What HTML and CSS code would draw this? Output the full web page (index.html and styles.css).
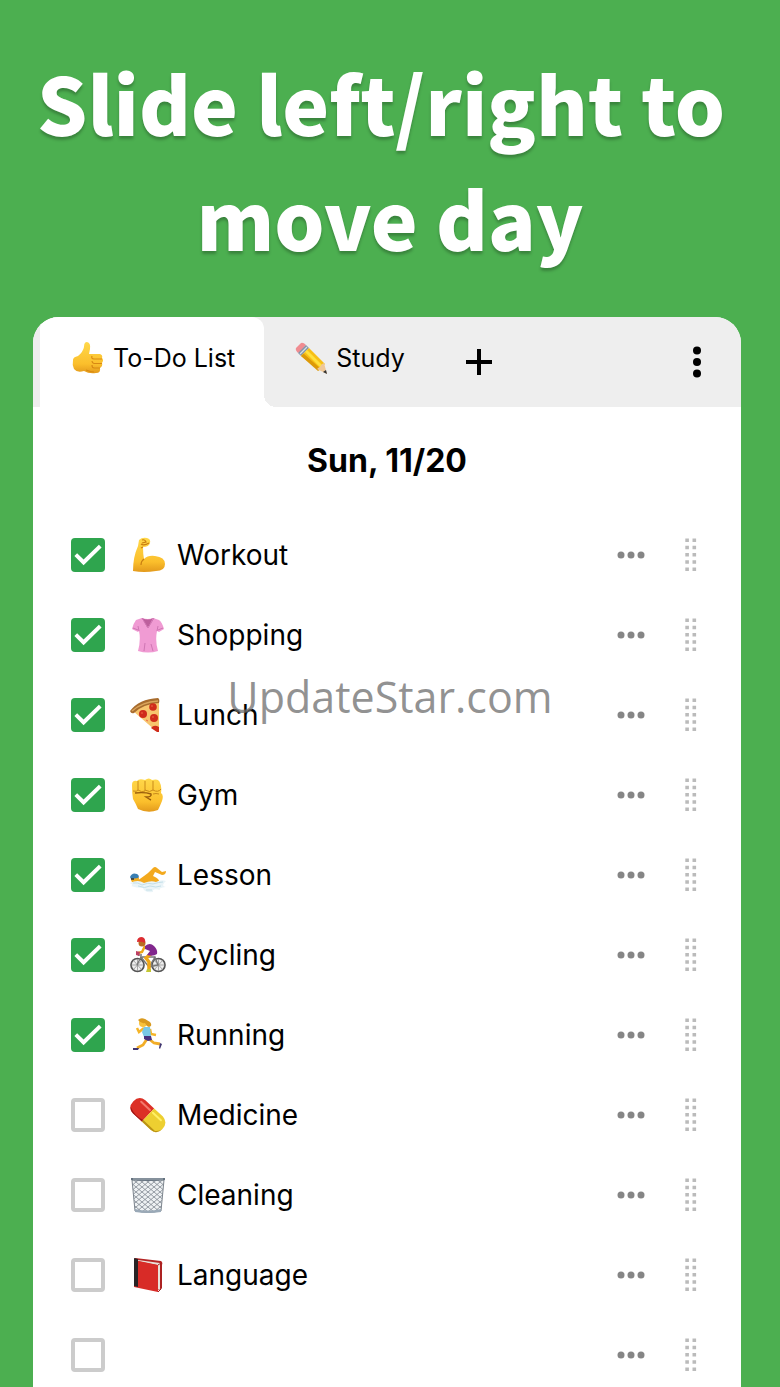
FILE: index.html
```
<!DOCTYPE html>
<html lang="en">
<head>
  <meta charset="UTF-8">
  <meta name="viewport" content="width=device-width, initial-scale=1.0">
  <title>To-Do List</title>
  <link rel="stylesheet" href="styles.css">
</head>
<body>
  <!-- Shared icons -->
  <svg class="sprite" aria-hidden="true">
    <defs>
      <linearGradient id="skin" x1="0" y1="0" x2="0" y2="1">
        <stop offset="0" stop-color="#ffd84a"/>
        <stop offset="0.7" stop-color="#fbbf2c"/>
        <stop offset="1" stop-color="#e39a1c"/>
      </linearGradient>
      <pattern id="mesh" width="6" height="5" patternUnits="userSpaceOnUse">
        <path d="M0 0L6 5M6 0L0 5" stroke="#7d858e" stroke-width="0.800"/>
      </pattern>
    </defs>
    <symbol id="more" viewBox="0 0 28 8">
      <circle cx="4" cy="4" r="3.5"/><circle cx="14" cy="4" r="3.5"/><circle cx="24" cy="4" r="3.5"/>
    </symbol>
    <symbol id="grip" viewBox="0 0 12 34">
      <path d="M0.300 0.500h3.600v3.600h-3.600zM7.500 0.500h3.600v3.600h-3.600zM0.300 7.700h3.600v3.600h-3.600zM7.500 7.700h3.600v3.600h-3.600zM0.300 15h3.600v3.600h-3.600zM7.500 15h3.600v3.600h-3.600zM0.300 22.200h3.600v3.600h-3.600zM7.500 22.200h3.600v3.600h-3.600zM0.300 29.500h3.600v3.600h-3.600zM7.500 29.500h3.600v3.600h-3.600z"/>
    </symbol>
  </svg>

  <h1 class="headline">Slide left/right to&nbsp;<br>move day</h1>

  <main class="card">
    <nav class="tabs">
      <button class="tab active">
        <svg class="tab-icon" viewBox="0 0 32 32">
          <path d="M1 18Q1 15 6 14Q11 10 12 5Q12 0 15 0Q19 1 18 7L17 12H28Q31 13 30 16Q32 18 30 21Q31 24 28 26Q29 31 24 31Q17 32 12 29Q5 31 2 27Q0 23 1 18Z" fill="url(#skin)"/>
          <path d="M30 17H22Q19 17 20 14M30 21.500H22Q20 21 20 19M28 26H22Q20 26 20 23M14 28Q19 30 22 30" fill="none" stroke="#d88913" stroke-width="1.200"/>
        </svg>
        To-Do List
      </button>
      <button class="tab">
        <svg class="tab-icon" viewBox="0 0 32 32">
          <path d="M1 6L6 1Q8 0 11 3L6 9L3 11Q0 8 1 6Z" fill="#f08c91"/>
          <path d="M3 11L11 3L14 6L6 14Z" fill="#8294a7"/>
          <path d="M5 12L12 5" stroke="#d4dde4" stroke-width="1.200"/>
          <path d="M6 14L14 6L30 22L24 28Z" fill="#f7bf16"/>
          <path d="M6 14L8.500 11.500L26 27L23 29Z" fill="#dc9908"/>
          <path d="M11 9L27 25" stroke="#ffe13d" stroke-width="3"/>
          <path d="M22 27Q24 25 25 25Q26 22 29 21L32 32Z" fill="#efc797"/>
          <path d="M28 30L31 28L32 32Z" fill="#333"/>
        </svg>
        Study
      </button>
      <button class="icon-button add" aria-label="Add list">
        <svg width="28" height="28" viewBox="0 0 28 28"><path d="M14 1V27M1 14H27" stroke="#000" stroke-width="4"/></svg>
      </button>
      <button class="icon-button menu" aria-label="Menu">
        <svg width="8" height="32" viewBox="0 0 8 32"><circle cx="4" cy="4.500" r="4"/><circle cx="4" cy="16" r="4"/><circle cx="4" cy="27.500" r="4"/></svg>
      </button>
    </nav>

    <h2 class="date">Sun, 11/20</h2>

    <ul class="list">
      <li class="item">
        <label class="task">
          <input type="checkbox" class="check" checked>
          <svg class="emoji" viewBox="0 0 36 36">
            <path d="M3 34Q3 20 8 9L9 3Q12 0 17 1Q21 2 20 6Q19 10 13 10Q13 17 14 22Q18 18 25 19Q35 20 35 27Q35 34 26 34Q14 36 3 34Z" fill="url(#skin)"/>
            <path d="M11 7Q14 9 19 6M12 3Q15 2 16 5L12 6M13 10L11 11M14 22Q11 24 11 28" fill="none" stroke="#c97f12" stroke-width="1.200"/>
          </svg>
          <span>Workout</span>
        </label>
        <button class="icon-button" aria-label="More"><svg class="more"><use href="#more"/></svg></button>
        <button class="icon-button" aria-label="Reorder"><svg class="grip"><use href="#grip"/></svg></button>
      </li>
      <li class="item">
        <label class="task">
          <input type="checkbox" class="check" checked>
          <svg class="emoji" viewBox="0 0 36 36">
            <path d="M12 1L6 3Q3 7 2 12L8 15L9 14Q11 23 8 34Q18 37 28 34Q25 24 27 14L29 15L34 12Q32 5 29 3L23 1Q18 3 12 1Z" fill="#f09bd3"/>
            <path d="M12 1Q18 4 23 1L19 9L17 10Z" fill="#bd5f9d"/>
            <path d="M12 1L18 11L24 1M9 14L8 9M27 14L28 9M14 34L15 26M23 34L21 27M3 11L8 13M33 11L28 13" fill="none" stroke="#cf76b3" stroke-width="1"/>
          </svg>
          <span>Shopping</span>
        </label>
        <button class="icon-button" aria-label="More"><svg class="more"><use href="#more"/></svg></button>
        <button class="icon-button" aria-label="Reorder"><svg class="grip"><use href="#grip"/></svg></button>
      </li>
      <li class="item">
        <label class="task">
          <input type="checkbox" class="check" checked>
          <svg class="emoji" viewBox="0 0 36 36">
            <path d="M3 14Q13 5 29 4V35L26 34Z" fill="#f7c56e"/>
            <path d="M0 14Q9 2 28 1Q30 2 29 6Q13 7 4 16Q1 17 0 14Z" fill="#a86c2e"/>
            <path d="M2 14Q12 5 28 4" fill="none" stroke="#d9a45b" stroke-width="1.500"/>
            <circle cx="13" cy="17" r="4" fill="#cf2c1b"/><circle cx="23" cy="10" r="3.800" fill="#cf2c1b"/>
            <circle cx="24" cy="21" r="4" fill="#cf2c1b"/><path d="M21 31Q24 27 29 30V35L27 35Z" fill="#cf2c1b"/>
            <path d="M11 16H13M21 9H23M22 20H24M16 23L18 24" stroke="#ee6744" stroke-width="1"/>
          </svg>
          <span>Lunch</span>
        </label>
        <button class="icon-button" aria-label="More"><svg class="more"><use href="#more"/></svg></button>
        <button class="icon-button" aria-label="Reorder"><svg class="grip"><use href="#grip"/></svg></button>
      </li>
      <li class="item">
        <label class="task">
          <input type="checkbox" class="check" checked>
          <svg class="emoji" viewBox="0 0 36 36">
            <path d="M2 8Q2 3 7 4Q9 1 15 3Q19 0 22 3Q29 1 30 6Q32 9 31 16Q34 18 32 24Q30 29 28 33Q18 37 8 32Q6 27 3 22Q2 16 2 8Z" fill="url(#skin)"/>
            <path d="M8 4V13Q7 15 3 14M15 4V14Q12 16 8 13M23 4V13Q20 16 15 13M31 12Q28 16 23 13M23 17Q26 16 29 17" fill="none" stroke="#c98a1b" stroke-width="1"/>
            <path d="M5 16Q15 15 21 17Q22 20 16 20Q19 22 21 23" fill="none" stroke="#9a5d0c" stroke-width="1.400"/>
          </svg>
          <span>Gym</span>
        </label>
        <button class="icon-button" aria-label="More"><svg class="more"><use href="#more"/></svg></button>
        <button class="icon-button" aria-label="Reorder"><svg class="grip"><use href="#grip"/></svg></button>
      </li>
      <li class="item">
        <label class="task">
          <input type="checkbox" class="check" checked>
          <svg class="emoji" viewBox="0 0 36 36">
            <path d="M7 24L14 19L18 16L23 11Q25 9 27 11L32 15L36 14Q36 18 32 18L25 15L23 19Q30 22 29 25L13 27Z" fill="#f3a91d"/>
            <circle cx="5" cy="22" r="4" fill="#f4ae20"/>
            <path d="M0 20Q2 15 7 17Q10 19 8 21L1 22Z" fill="#397eb2"/>
            <path d="M1 22H4" stroke="#333" stroke-width="1.500"/>
            <path d="M0 26Q8 22 14 26Q21 23 26 25Q31 22 36 24Q30 29 36 30Q28 31 30 33Q22 31 23 35Q14 36 13 31Q6 31 1 29Q4 28 0 26Z" fill="#eaf4f8"/>
            <path d="M3 26Q8 25 12 28Q18 25 23 27Q29 25 33 25M8 29Q15 32 20 29Q26 31 31 29M16 33H22" fill="none" stroke="#c3dfe8" stroke-width="1"/>
          </svg>
          <span>Lesson</span>
        </label>
        <button class="icon-button" aria-label="More"><svg class="more"><use href="#more"/></svg></button>
        <button class="icon-button" aria-label="Reorder"><svg class="grip"><use href="#grip"/></svg></button>
      </li>
      <li class="item">
        <label class="task">
          <input type="checkbox" class="check" checked>
          <svg class="emoji" viewBox="0 0 36 36">
            <circle cx="7.500" cy="28" r="6.500" fill="#eee" stroke="#555" stroke-width="1.700"/>
            <circle cx="28.500" cy="28" r="6.500" fill="#eee" stroke="#555" stroke-width="1.700"/>
            <path d="M7.500 22V34M1 28H14M3 23L12 33M12 23L3 33M28.500 22V34M22 28H35M24 23L33 33M33 23L24 33" stroke="#888" stroke-width="0.700"/>
            <path d="M7 28L11 20L19 30L25 20L28 28M10 20H25M19 30L28 28M8 18H12" fill="none" stroke="#777" stroke-width="1.300"/>
            <path d="M23 15L16 21L19 25V32" fill="none" stroke="#efa718" stroke-width="3.500"/>
            <path d="M15 9L12 15L8 16" fill="none" stroke="#efa718" stroke-width="2.500"/>
            <path d="M15 9Q20 5 24 9Q28 13 27 17Q23 20 17 18L20 14L15 12Z" fill="#81278d"/>
            <circle cx="12" cy="6" r="3.500" fill="#b96d22"/>
            <path d="M7 5Q7 0 12 0Q16 1 15 6Q11 4 7 5Z" fill="#dc2d32"/>
            <path d="M6 14L10 15L9 19L6 18Z" fill="#bd4064"/>
            <path d="M17 32H21V35H16Z" fill="#c3c734"/>
          </svg>
          <span>Cycling</span>
        </label>
        <button class="icon-button" aria-label="More"><svg class="more"><use href="#more"/></svg></button>
        <button class="icon-button" aria-label="Reorder"><svg class="grip"><use href="#grip"/></svg></button>
      </li>
      <li class="item">
        <label class="task">
          <input type="checkbox" class="check" checked>
          <svg class="emoji" viewBox="0 0 36 36">
            <path d="M14 11L9 15L7 11M20 12L21 17L26 18" fill="none" stroke="#f5b529" stroke-width="2.500"/>
            <path d="M17 22L13 28L7 31M19 22L24 26L30 27" fill="none" stroke="#f2ad26" stroke-width="2.800"/>
            <path d="M14 10L20 10L21 19L14 20L12 15Z" fill="#79c8e6"/>
            <path d="M14 19H21L22 23L18 24L14 22Z" fill="#49317f"/>
            <circle cx="13" cy="6" r="4" fill="#f8c23b"/>
            <path d="M8 3Q11 0 15 2L20 5Q23 9 19 10Q16 9 15 6Q11 7 8 3Z" fill="#d99a1e"/>
            <path d="M3 31L9 31L8 33L3 33ZM30 26L32 27L30 32L29 31Z" fill="#40356f"/>
          </svg>
          <span>Running</span>
        </label>
        <button class="icon-button" aria-label="More"><svg class="more"><use href="#more"/></svg></button>
        <button class="icon-button" aria-label="Reorder"><svg class="grip"><use href="#grip"/></svg></button>
      </li>
      <li class="item">
        <label class="task">
          <input type="checkbox" class="check">
          <svg class="emoji" viewBox="0 0 36 36">
            <g transform="rotate(43 18 18)">
              <path d="M18 9H6Q-2 10 -2 18Q-2 27 6 27H18Z" fill="#dc3026"/>
              <path d="M18 9H30Q38 10 38 18Q38 27 30 27H18Z" fill="#edcf31"/>
              <path d="M0 24Q9 28 18 25V27H6Q2 27 0 24Z" fill="#9e1717"/>
              <path d="M18 25H34Q38 22 38 18Q38 27 30 27H18Z" fill="#b99216"/>
              <path d="M4 13H16" stroke="#f4796b" stroke-width="2" stroke-linecap="round"/>
              <path d="M20 13H31" stroke="#fff067" stroke-width="2" stroke-linecap="round"/>
            </g>
          </svg>
          <span>Medicine</span>
        </label>
        <button class="icon-button" aria-label="More"><svg class="more"><use href="#more"/></svg></button>
        <button class="icon-button" aria-label="Reorder"><svg class="grip"><use href="#grip"/></svg></button>
      </li>
      <li class="item">
        <label class="task">
          <input type="checkbox" class="check">
          <svg class="emoji" viewBox="0 0 36 36">
            <path d="M2 3H34L31 34Q18 37 5 34Z" fill="#eef1f3"/>
            <path d="M2 3H34L31 34Q18 37 5 34Z" fill="url(#mesh)" stroke="#7d858e" stroke-width="1"/>
            <path d="M5 32Q18 35 31 32L31 35Q18 37 5 35Z" fill="#9aa9b7"/>
            <path d="M1 1H35V3Q18 5 1 3Z" fill="#65727f"/>
            <path d="M3 2H33" stroke="#a6b0ba" stroke-width="1"/>
          </svg>
          <span>Cleaning</span>
        </label>
        <button class="icon-button" aria-label="More"><svg class="more"><use href="#more"/></svg></button>
        <button class="icon-button" aria-label="Reorder"><svg class="grip"><use href="#grip"/></svg></button>
      </li>
      <li class="item">
        <label class="task">
          <input type="checkbox" class="check">
          <svg class="emoji" viewBox="0 0 36 36">
            <path d="M5 1L31 4Q33 5 32 8V31L27 34L5 27Z" fill="#b42525"/>
            <path d="M8 3L30 6V32L27 33V8L7 4Z" fill="#e9e0d8"/>
            <path d="M4 3L28 8V35L4 30Z" fill="#d82b27"/>
            <path d="M4 1L8 2V30L4 29Z" fill="#292426"/>
            <path d="M28 8L31 6V32L28 35" fill="none" stroke="#a42121" stroke-width="1"/>
          </svg>
          <span>Language</span>
        </label>
        <button class="icon-button" aria-label="More"><svg class="more"><use href="#more"/></svg></button>
        <button class="icon-button" aria-label="Reorder"><svg class="grip"><use href="#grip"/></svg></button>
      </li>
      <li class="item">
        <label class="task">
          <input type="checkbox" class="check" aria-label="New task">
        </label>
        <button class="icon-button" aria-label="More"><svg class="more"><use href="#more"/></svg></button>
        <button class="icon-button" aria-label="Reorder"><svg class="grip"><use href="#grip"/></svg></button>
      </li>
    </ul>
  </main>

  <div class="watermark">UpdateStar.com</div>
</body>
</html>
```
FILE: styles.css
```
* {
  box-sizing: border-box;
}

body {
  margin: 0;
  height: 100vh;
  overflow: hidden;
  position: relative;
  background-color: #4caf50;
  color: #000;
  font-family: Inter, Arial, sans-serif;
}

.sprite {
  position: absolute;
  width: 0;
  height: 0;
}

.headline {
  margin: 0;
  padding: 44px 0 43px;
  color: #fff;
  font-family: "Noto Sans CJK JP", sans-serif;
  font-size: 79px;
  font-weight: 900;
  line-height: 115px;
  text-align: center;
  text-shadow: 0 3px 3px rgba(0, 0, 0, 0.25);
}

.card {
  margin: 0 39px 0 33px;
  background-color: #fff;
  border-radius: 26px 26px 0 0;
  overflow: hidden;
}

/* Tabs */
.tabs {
  display: flex;
  align-items: stretch;
  height: 90px;
  padding: 0 40px 0 7px;
  background-color: #eee;
}

button {
  border: none;
  padding: 0;
  background: none;
  color: inherit;
  font-family: inherit;
  cursor: pointer;
}

.tab {
  display: flex;
  align-items: center;
  gap: 9px;
  padding: 0 29px 9px 31px;
  font-size: 25px;
}

.tab.active {
  position: relative;
  padding-left: 32px;
  background-color: #fff;
  border-radius: 12px 12px 0 0;
}

/* curved foot where the active tab meets the bar */
.tab.active::after {
  content: "";
  position: absolute;
  left: 100%;
  bottom: 0;
  width: 12px;
  height: 12px;
  background: radial-gradient(circle at top right, #eee 12px, #fff 12px);
}

.tab-icon {
  width: 32px;
  height: 32px;
}

.icon-button {
  display: flex;
  align-items: center;
}

.add {
  padding-left: 31px;
}

.menu {
  margin-left: auto;
}

.date {
  margin: 0;
  font-size: 32px;
  font-weight: 700;
  line-height: 108px;
  text-align: center;
}

/* Task list */
.list {
  margin: 0;
  padding: 0;
  list-style: none;
}

.item {
  display: flex;
  align-items: center;
  gap: 40px;
  height: 80px;
  padding: 0 44px 0 38px;
}

.task {
  display: flex;
  flex: 1;
  align-items: center;
  font-size: 28px;
}

.check {
  appearance: none;
  width: 34px;
  height: 34px;
  margin: 0 25px 0 0;
  border: 4px solid #ccc;
  border-radius: 4px;
}

.check:checked {
  border: none;
  background-color: #2fa54e;
}

.check:checked::before {
  content: "";
  display: block;
  height: 100%;
  background-color: #fff;
  clip-path: polygon(10% 53%, 37% 80%, 90% 28%, 82% 20%, 37% 63%, 18% 45%);
}

.emoji {
  width: 36px;
  height: 36px;
  margin-right: 11px;
}

.more {
  width: 28px;
  height: 8px;
  fill: #858585;
}

.grip {
  width: 12px;
  height: 34px;
  fill: #bbb;
}

.watermark {
  position: absolute;
  top: 667px;
  left: 0;
  right: 0;
  color: rgba(110, 110, 110, 0.75);
  font-family: "Open Sans", sans-serif;
  font-size: 43px;
  line-height: 60px;
  text-align: center;
  pointer-events: none;
}
```
